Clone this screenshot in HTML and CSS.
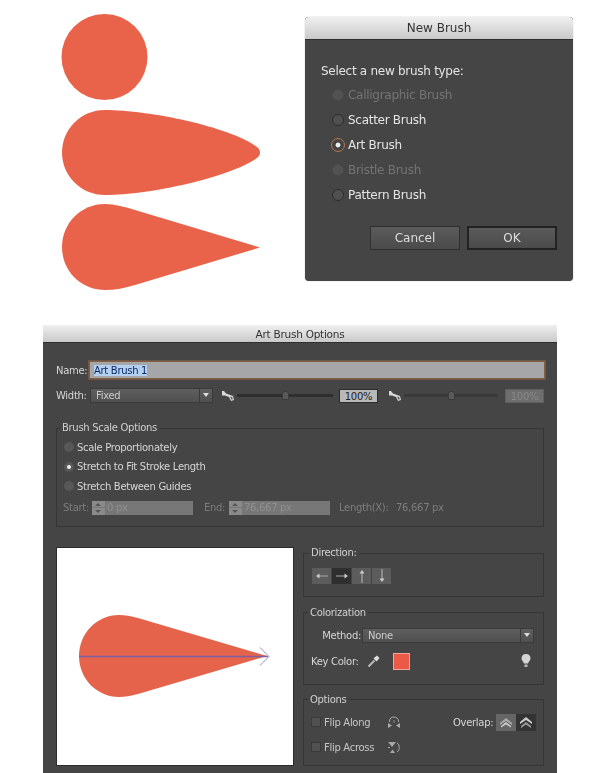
FILE: index.html
```html
<!DOCTYPE html>
<html lang="en">
<head>
<meta charset="utf-8">
<title>Art Brush Options</title>
<link rel="stylesheet" href="styles.css">
</head>
<body>
<div class="page">
  <div class="top">
    <svg class="shapes" width="262" height="300" viewBox="0 0 262 300">
      <circle cx="104.5" cy="57" r="43" fill="#e9634a"/>
      <path fill="#e9634a" d="M105 110C150 110 230 127 257 147C261 150 261 155 257 158C230 177 150 195 105 195C81 195 62 176 62 152.500C62 129 81 110 105 110Z"/>
      <path fill="#e9634a" d="M105 204C115 204 125 207 135 210L260 247.500L135 285C125 288 115 290 105 290C81 290 62 271 62 247C62 223 81 204 105 204Z"/>
    </svg>
    <section class="dialog new-brush">
      <header class="titlebar title-new">New Brush</header>
      <div class="new-body">
        <p class="select-label">Select a new brush type:</p>
        <div class="radio-row off"><span class="radio"></span>Calligraphic Brush</div>
        <div class="radio-row"><span class="radio"></span>Scatter Brush</div>
        <div class="radio-row"><span class="radio checked"></span>Art Brush</div>
        <div class="radio-row off"><span class="radio"></span>Bristle Brush</div>
        <div class="radio-row"><span class="radio"></span>Pattern Brush</div>
        <div class="button-row">
          <span class="btn">Cancel</span>
          <span class="btn primary">OK</span>
        </div>
      </div>
    </section>
  </div>

  <section class="dialog art-brush">
    <header class="titlebar title-art">Art Brush Options</header>
    <div class="art-body">
      <div class="name-row">
        <span class="lbl name-lbl">Name:</span>
        <div class="name-input"><span class="selected">Art Brush 1</span></div>
      </div>
      <div class="width-row">
        <span class="lbl width-lbl">Width:</span>
        <div class="select width-select"><span>Fixed</span><i class="caret"></i></div>
        <svg class="pen pen-a" width="12" height="10" viewBox="0 0 12 10"><path fill="#d8d8d8" d="M0 0H2L4 2.500L11 5L12 9L9 10L7 6L3 4.500H0Z"/><path fill="#555" d="M8 5.500L10.500 6.500L10.500 8.500L9.500 8.500Z"/></svg>
        <div class="slider slider-a"><i class="thumb"></i></div>
        <div class="num-box">100%</div>
        <svg class="pen pen-b" width="12" height="10" viewBox="0 0 12 10"><path fill="#d8d8d8" d="M0 0H2L4 2.500L11 5L12 9L9 10L7 6L3 4.500H0Z"/><path fill="#555" d="M8 5.500L10.500 6.500L10.500 8.500L9.500 8.500Z"/></svg>
        <div class="slider slider-b"><i class="thumb"></i></div>
        <div class="num-box disabled">100%</div>
      </div>

      <fieldset class="group scale-group">
        <legend>Brush Scale Options</legend>
        <div class="mini-row"><span class="mini-radio"></span>Scale Proportionately</div>
        <div class="mini-row"><span class="mini-radio checked"></span>Stretch to Fit Stroke Length</div>
        <div class="mini-row"><span class="mini-radio"></span>Stretch Between Guides</div>
        <div class="start-row">
          <span class="dim start-lbl">Start:</span>
          <span class="spinner"></span>
          <span class="dim-input">0 px</span>
          <span class="dim end-lbl">End:</span>
          <span class="spinner"></span>
          <span class="dim-input">76,667 px</span>
          <span class="dim len-lbl">Length(X):</span>
          <span class="dim len-val">76,667 px</span>
        </div>
      </fieldset>

      <div class="lower">
        <div class="preview">
          <svg width="236" height="217" viewBox="57 548 236 217">
            <path fill="#e5634b" d="M119 615C125 615 131 616 138 618L267 656L138 694C131 696 125 697 119 697C97 697 79 679 79 656C79 633 97 615 119 615Z"/>
            <path d="M79 656.500H268" stroke="#7d5fa6" stroke-width="1.500" fill="none"/>
            <path d="M260 647.500L269 656.500L260 665.500" stroke="#9c8fc8" stroke-width="1" fill="none"/>
          </svg>
        </div>
        <div class="side">
          <fieldset class="group direction-group">
            <legend>Direction:</legend>
            <div class="seg">
              <span class="seg-btn"><svg width="16" height="12" viewBox="0 0 16 12"><path d="M5 6H14" stroke="#aaa" fill="none"/><path d="M2 6L5.500 3.500V8.500Z" fill="#ccc"/></svg></span>
              <span class="seg-btn on"><svg width="16" height="12" viewBox="0 0 16 12"><path d="M2 6H11" stroke="#aaa" fill="none"/><path d="M14 6L10.500 3.500V8.500Z" fill="#ccc"/></svg></span>
              <span class="seg-btn"><svg width="12" height="14" viewBox="0 0 12 14"><path d="M6 4V14" stroke="#bbb" fill="none"/><path d="M6 1L3.500 4.500H8.500Z" fill="#ccc"/></svg></span>
              <span class="seg-btn"><svg width="12" height="14" viewBox="0 0 12 14"><path d="M6 0V10" stroke="#bbb" fill="none"/><path d="M6 13L3.500 9.500H8.500Z" fill="#ccc"/></svg></span>
            </div>
          </fieldset>
          <fieldset class="group color-group">
            <legend>Colorization</legend>
            <div class="method-row">
              <span class="lbl method-lbl">Method:</span>
              <div class="select method-select"><span>None</span><i class="caret"></i></div>
            </div>
            <div class="key-row">
              <span class="lbl">Key Color:</span>
              <svg class="dropper" width="14" height="14" viewBox="0 0 14 14"><path d="M1.500 12.500L7.500 6.500" stroke="#bbb" stroke-width="2" fill="none"/><path d="M6.500 4.500L9.500 7.500L10.500 6.500L12.500 4L10 1.500L7.500 3.500Z" fill="#ddd"/></svg>
              <span class="swatch"></span>
              <svg class="bulb" width="10" height="14" viewBox="0 0 10 14"><path d="M5 0C2 0 0.500 2 0.500 4.500C0.500 6.500 2.500 7.500 3 9.500H7C7.500 7.500 9.500 6.500 9.500 4.500C9.500 2 8 0 5 0Z" fill="#d5d5d5"/><path d="M3.500 10.500H6.500V13H3.500Z" fill="#bbb"/></svg>
            </div>
          </fieldset>
          <fieldset class="group options-group">
            <legend>Options</legend>
            <div class="flip-row">
              <span class="check"></span><span class="lbl flip-lbl">Flip Along</span>
              <svg class="flip-icon" width="14" height="13" viewBox="0 0 14 13"><path d="M2.500 6V5C2.500 2.500 4.500 1 7 1C9.500 1 11.500 2.500 11.500 5V6" stroke="#aaa" fill="none"/><path d="M1 7L5 9.500L1 12ZM13 7L9 9.500L13 12Z" fill="#aaa"/><path d="M7 4V7" stroke="#888" fill="none"/></svg>
              <span class="lbl overlap-lbl">Overlap:</span>
              <span class="overlap"><svg width="14" height="11" viewBox="0 0 14 11"><path d="M1 6L7 1L13 6V8L7 4L1 8Z" fill="#aaa"/><path d="M2 9L7 5L12 9V10.500L7 7.500L2 10.500Z" fill="#ccc"/></svg></span>
              <span class="overlap on"><svg width="14" height="13" viewBox="0 0 14 13"><path d="M1 6L7 1L13 6V8L7 4L1 8Z" fill="#ccc"/><path d="M2 10L7 6L12 10V12L7 8.500L2 12Z" fill="#999"/></svg></span>
            </div>
            <div class="flip-row second">
              <span class="check"></span><span class="lbl flip-lbl">Flip Across</span>
              <svg class="flip-icon across" width="14" height="13" viewBox="0 0 14 13"><path d="M1 1H9L5 6ZM3 12H8L5.500 8.500Z" fill="#a8a8a8"/><path d="M10 2C13 4 13 9 10 11M1 6.500H3" stroke="#aaa" fill="none"/></svg>
            </div>
          </fieldset>
        </div>
      </div>
    </div>
  </section>
</div>
</body>
</html>
```
FILE: styles.css
```css
* { box-sizing: border-box; }
html, body { margin: 0; padding: 0; background: #fff; }
.page {
  width: 600px;
  height: 773px;
  overflow: hidden;
  font-family: "DejaVu Sans", sans-serif;
  color: #d6d6d6;
  filter: blur(0.35px);
}
.top { display: flex; align-items: flex-start; height: 325px; }
.shapes { display: block; flex: none; }
.dialog { background: #454545; }
.titlebar {
  text-align: center;
  color: #333;
  background: linear-gradient(#f0f0f0, #c9c9c9);
  border-bottom: 1px solid #2f2f2f;
}
.new-brush {
  width: 268px;
  height: 264px;
  margin: 17px 0 0 43px;
  border-radius: 4px;
  box-shadow: 0 0 1px #777;
  overflow: hidden;
}
.title-new { height: 23px; line-height: 22px; font-size: 12px; }
.new-body { padding: 23px 16px 0 16px; }
.select-label { margin: 0 0 3px; height: 16px; line-height: 16px; font-size: 12px; letter-spacing: -0.28px; color: #e4e4e4; }
.radio-row {
  display: flex;
  align-items: center;
  gap: 4px;
  height: 25px;
  padding-left: 11px;
  font-size: 12px;
  letter-spacing: -0.28px;
  color: #e4e4e4;
}
.radio-row.off { color: #747474; }
.radio {
  width: 12px;
  height: 12px;
  border-radius: 50%;
  background: #505050;
  border: 1px solid #2c2c2c;
}
.off .radio { background: #525252; border-color: #4a4a4a; }
.radio.checked {
  background: radial-gradient(circle, #eee 0 2px, #444 2.8px);
  border: 1px solid #b8764a;
  width: 14px;
  height: 14px;
  margin: 0 -1px;
}
.button-row { display: flex; justify-content: flex-end; gap: 7px; margin-top: 19px; }
.btn {
  width: 90px;
  height: 24px;
  line-height: 22px;
  text-align: center;
  font-size: 12px;
  color: #ddd;
  background: linear-gradient(#5b5b5b, #4a4a4a);
  border: 1px solid #303030;
}
.primary { border: 2px solid #222; line-height: 20px; }

.art-brush { width: 514px; height: 448px; margin-left: 43px; }
.title-art { height: 18px; line-height: 18px; font-size: 10.5px; letter-spacing: -0.25px; }
.art-body { padding: 18px 13px 0; font-size: 10px; letter-spacing: -0.3px; }
.lbl { color: #d6d6d6; font-size: 10px; }
.name-row { display: flex; align-items: center; height: 18px; }
.name-lbl { width: 33px; flex: none; }
.name-input {
  flex: 1;
  height: 18px;
  margin-right: -1px;
  padding: 0 4px;
  background: #a6a6a8;
  border: 1px solid #7d6047;
  outline: 1px solid #6e5643;
  color: #112;
  line-height: 17px;
}
.selected { background: #b5d0f0; color: #0b2a66; }
.width-row { display: flex; align-items: center; height: 15px; margin-top: 9px; }
.width-lbl { width: 34px; flex: none; }
.select {
  display: flex;
  align-items: center;
  justify-content: space-between;
  height: 15px;
  padding-left: 5px;
  color: #ccc;
  font-size: 10px;
  background: linear-gradient(#5e5e5e, #505050);
  border: 1px solid #3a3a3a;
}
.width-select { width: 123px; flex: none; }
.caret {
  position: relative;
  width: 13px;
  height: 100%;
  border-left: 1px solid #3a3a3a;
}
.caret::after {
  content: "";
  position: absolute;
  left: 3px;
  top: 4px;
  border-left: 3px solid transparent;
  border-right: 3px solid transparent;
  border-top: 4px solid #ddd;
}
.pen { flex: none; }
.pen-a { margin: 0 3px 0 9px; }
.pen-b { margin: 0 3px 0 11px; }
.slider { height: 3px; background: #2e2e2e; display: flex; align-items: center; flex: none; }
.slider-a { width: 96px; justify-content: center; }
.slider-b { width: 94px; justify-content: center; background: #393939; }
.thumb { width: 7px; height: 9px; background: #5a5a5a; border-radius: 3px 3px 1px 1px; border: 1px solid #3a3a3a; }
.num-box {
  flex: none;
  width: 39px;
  height: 14px;
  margin-left: 6px;
  line-height: 13px;
  text-align: center;
  background: #b8b8b8;
  color: #222;
  border: 1px solid #2c2c2c;
}
.num-box.disabled { margin-left: 7px; background: #6e6e6e; color: #888; border-color: #606060; }

.group { margin: 0; padding: 0; border: 1px solid #363636; min-width: 0; }
.group legend {
  margin-left: -3px;
  padding: 0 2px;
  height: 12px;
  line-height: 12px;
  font-size: 10px;
  color: #d0d0d0;
}
.scale-group { margin-top: 19px; width: 488px; height: 105px; padding: 3.500px 0 0 6px; }
.mini-row { display: flex; align-items: center; gap: 3px; height: 19.500px; font-size: 10px; color: #d6d6d6; }
.mini-radio { width: 10px; height: 10px; border-radius: 50%; background: #575757; margin-left: 1px; }
.mini-radio.checked { background: radial-gradient(circle, #e8e8e8 0 1.500px, #575757 2.500px); }
.start-row { display: flex; align-items: center; height: 14px; margin-top: 4.500px; font-size: 10px; }
.dim { color: #7d7d7d; }
.start-lbl { width: 29px; }
.spinner {
  width: 13px;
  height: 14px;
  background: linear-gradient(#777, #777) center / 100% 1px no-repeat, #8a8a8a;
  flex: none;
  position: relative;
}
.spinner::before, .spinner::after {
  content: "";
  position: absolute;
  left: 3px;
  border-left: 3px solid transparent;
  border-right: 3px solid transparent;
}
.spinner::before { top: 2px; border-bottom: 3px solid #555; }
.spinner::after { bottom: 2px; border-top: 3px solid #555; }
.dim-input {
  width: 88px;
  height: 14px;
  line-height: 14px;
  padding-left: 2px;
  background: #777;
  color: #8f8f8f;
  flex: none;
}
.end-lbl { margin-left: 11px; width: 25px; }
.len-lbl { margin-left: 9px; width: 57px; }
.lower { display: flex; gap: 9px; margin-top: 20px; }
.preview {
  flex: none;
  width: 238px;
  height: 219px;
  background: #fff;
  border: 1px solid #2b2b2b;
}
.preview svg { display: block; }
.side { flex: 1; margin-top: 0; }
.direction-group { height: 50px; padding: 9px 0 0 8px; width: 241px; }
.seg { display: flex; width: 80px; height: 16px; }
.seg-btn {
  width: 20px;
  height: 16px;
  display: flex;
  align-items: center;
  justify-content: center;
  background: #5c5c5c;
  border-right: 1px solid #444;
}
.seg-btn.on { background: #2f2f2f; }
.color-group { margin-top: 9.500px; width: 241px; height: 78px; padding: 7px 0 0 7px; }
.method-row { display: flex; align-items: center; height: 15px; margin-top: 2px; }
.method-lbl { width: 50px; text-align: right; flex: none; }
.method-select { width: 172px; margin-left: 1px; }
.key-row { display: flex; align-items: center; height: 17px; margin-top: 10px; }
.dropper { margin-left: 8px; }
.swatch { width: 17px; height: 17px; margin-left: 12px; background: #ea5a47; border: 1px solid #f0a79c; }
.bulb { margin-left: 111px; }
.options-group { margin-top: 9px; width: 241px; height: 72px; padding: 8px 0 0 7px; }
.flip-row { display: flex; align-items: center; height: 17px; }
.flip-row.second { margin-top: 8px; }
.check { width: 10px; height: 10px; background: #515151; border: 1px solid #3a3a3a; flex: none; }
.flip-lbl { margin-left: 3px; width: 63px; flex: none; color: #c6c6c6; }
.flip-icon { flex: none; }
.overlap-lbl { margin-left: 52px; width: 43px; flex: none; }
.overlap {
  width: 20px;
  height: 17px;
  display: flex;
  align-items: center;
  justify-content: center;
  background: #666;
  flex: none;
}
.overlap.on { background: #333; }
```
